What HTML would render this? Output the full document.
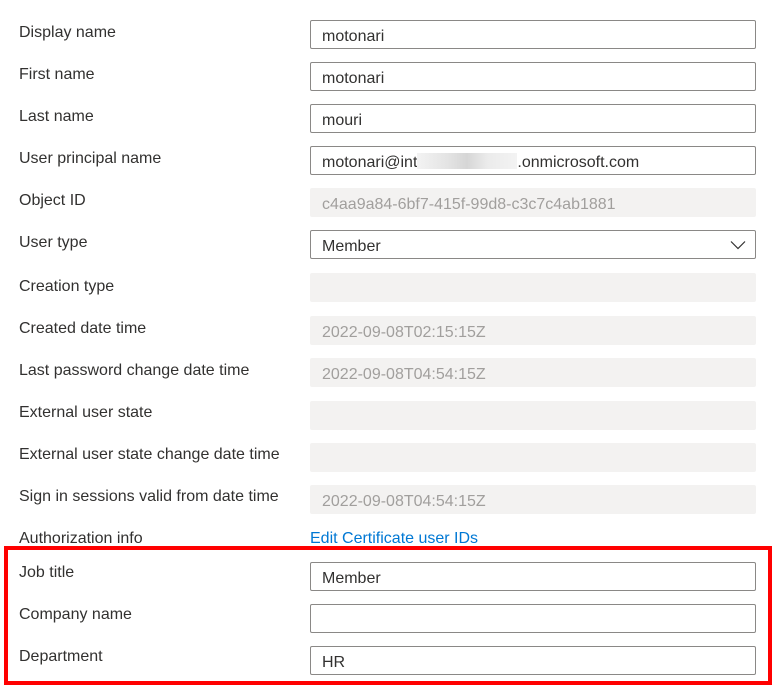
<!DOCTYPE html>
<html><head><meta charset="utf-8"><style>
body{margin:0;width:775px;height:686px;background:#fff;position:relative;overflow:hidden;font-family:"Segoe UI","Liberation Sans",sans-serif;font-size:16px;color:#323130}
.l{position:absolute;left:19px;line-height:20px;white-space:nowrap}
.f{position:absolute;left:310px;width:444px;height:27px;border:1px solid #8a8886;border-radius:2px;box-sizing:content-box;line-height:27px;padding-left:0}
.f span{position:absolute;left:11px;top:0;line-height:31px;white-space:nowrap}
.d{border-color:#f3f2f1;background:#f3f2f1;color:#a19f9d}
.red{position:absolute;left:4px;top:546px;width:760px;height:131px;border:4px solid #f00}
.blur{display:inline-block;width:100px;height:16px;vertical-align:-2px;background:linear-gradient(90deg,#f3f3f3,#e4e4e4 30%,#d6d6d6 50%,#ebebeb 70%,#f3f3f3)}
</style></head><body>
<div class="l" style="top:23px">Display name</div><div class="f" style="top:20px"><span>motonari</span></div>
<div class="l" style="top:65px">First name</div><div class="f" style="top:62px"><span>motonari</span></div>
<div class="l" style="top:107px">Last name</div><div class="f" style="top:104px"><span>mouri</span></div>
<div class="l" style="top:149px">User principal name</div><div class="f" style="top:146px"><span>motonari@int<span class="blur" style="position:static"></span>.onmicrosoft.com</span></div>
<div class="l" style="top:191px">Object ID</div><div class="f d" style="top:188px"><span>c4aa9a84-6bf7-415f-99d8-c3c7c4ab1881</span></div>
<div class="l" style="top:233px">User type</div><div class="f" style="top:230px"><span>Member</span><svg style="position:absolute;right:9px;top:9px" width="16" height="10" viewBox="0 0 16 10"><path d="M1 1.5 L8 8.5 L15 1.5" fill="none" stroke="#323130" stroke-width="1.2"/></svg></div>
<div class="l" style="top:277px">Creation type</div><div class="f d" style="top:273px"></div>
<div class="l" style="top:319px">Created date time</div><div class="f d" style="top:316px"><span>2022-09-08T02:15:15Z</span></div>
<div class="l" style="top:361px">Last password change date time</div><div class="f d" style="top:358px"><span>2022-09-08T04:54:15Z</span></div>
<div class="l" style="top:403px">External user state</div><div class="f d" style="top:401px"></div>
<div class="l" style="top:445px">External user state change date time</div><div class="f d" style="top:443px"></div>
<div class="l" style="top:487px">Sign in sessions valid from date time</div><div class="f d" style="top:485px"><span>2022-09-08T04:54:15Z</span></div>
<div class="l" style="top:529px">Authorization info</div><div class="l" style="left:310px;top:529px;color:#0078d4">Edit Certificate user IDs</div>
<div class="red"></div>
<div class="l" style="top:563px">Job title</div><div class="f" style="top:562px"><span>Member</span></div>
<div class="l" style="top:605px">Company name</div><div class="f" style="top:604px"></div>
<div class="l" style="top:647px">Department</div><div class="f" style="top:646px"><span>HR</span></div>
</body></html>
